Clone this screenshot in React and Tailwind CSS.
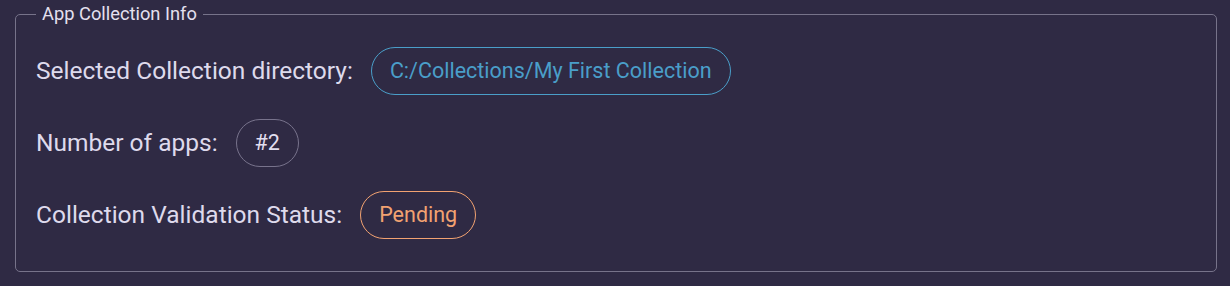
import React from "react";

const ROWS = [
  {
    label: "Selected Collection directory:",
    value: "C:/Collections/My First Collection",
    chip: "border-[#4a9ec9] text-[#4a9ec9]",
  },
  {
    label: "Number of apps:",
    value: "#2",
    chip: "border-[#78738c] text-[#e2deef]",
  },
  {
    label: "Collection Validation Status:",
    value: "Pending",
    chip: "border-[#f2a271] text-[#f2a271]",
  },
];

export default function App() {
  return (
    <div
      className="w-[1230px] h-[286px] bg-[#2f2a44] pt-[3px] pl-[15px] pr-[13px]"
      style={{ fontFamily: "Roboto, 'Noto Sans', sans-serif" }}
    >
      <fieldset className="border border-[#77738a] rounded-[5px] pl-[20px] pr-4 pt-[22px] pb-[32px] m-0 min-w-0">
        <legend className="px-[6px] text-[18.3px] leading-[22px] text-[#e4e0ef]">
          App Collection Info
        </legend>

        <div className="flex flex-col gap-6">
          {ROWS.map((row) => (
            <div key={row.label} className="flex items-center gap-[18px] h-12">
              <span className="text-[24.5px] text-[#dedaec]">{row.label}</span>
              <span
                className={`h-12 flex items-center px-[18px] rounded-full border text-[21.5px] ${row.chip}`}
              >
                {row.value}
              </span>
            </div>
          ))}
        </div>
      </fieldset>
    </div>
  );
}
